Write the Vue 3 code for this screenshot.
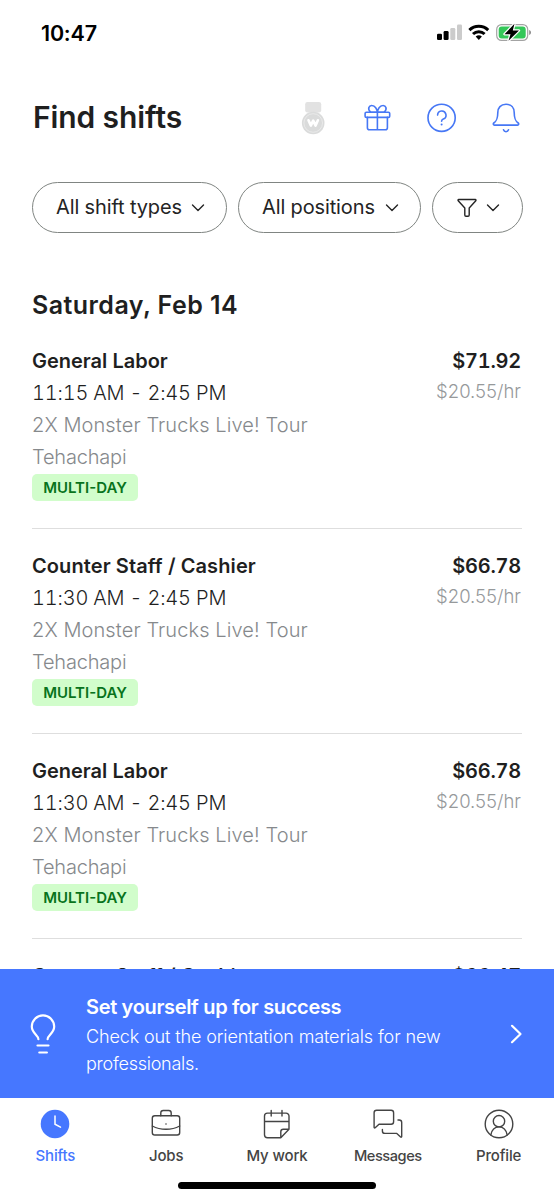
<script setup>
const shifts = [
  { id: 1, role: 'General Labor', cls: 'labor', time: '11:15 AM - 2:45 PM', pay: '$71.92' },
  { id: 2, role: 'Counter Staff / Cashier', cls: 'counter', time: '11:30 AM - 2:45 PM', pay: '$66.78' },
  { id: 3, role: 'General Labor', cls: 'labor', time: '11:30 AM - 2:45 PM', pay: '$66.78' },
  { id: 4, role: 'Counter Staff / Cashier', cls: 'counter', pay: '$66.47' },
]
</script>

<template>
  <div class="screen">
    <header class="status">
      <span class="clock">10:47</span>
      <svg class="status-icons" width="96" height="20" viewBox="0 0 96 20">
        <rect x="0" y="10.8" width="5" height="6.2" rx="1.3" />
        <rect x="6.6" y="8" width="5" height="9" rx="1.3" />
        <rect x="13.3" y="5" width="5" height="12" rx="1.3" fill="#cbcbcb" />
        <rect x="20" y="1.6" width="5" height="15.4" rx="1.3" fill="#cbcbcb" />
        <g fill="none" stroke="#000" stroke-width="3">
          <path d="M32.4 7.1a13.6 13.6 0 0 1 18.8 0" />
          <path d="M36 11a8.4 8.4 0 0 1 11.6 0" />
        </g>
        <path d="M38.7 13.6a4.6 4.6 0 0 1 6.2 0L41.8 17z" />
        <rect x="59.7" y="1.6" width="31" height="15.8" rx="4.8" fill="none" stroke="#a3a3a3" stroke-width="1.2" />
        <rect x="61.7" y="3.6" width="27" height="11.8" rx="3" fill="#34c759" />
        <path d="M92.2 7v5c2.4-.9 2.4-4.1 0-5z" fill="#8e8e8e" />
        <path d="M77.5 .8l-10 10.400h6L71.500 17.800l10.500-10.300h-6.200z" stroke="#fff" stroke-width="2.400" paint-order="stroke" stroke-linejoin="round" />
      </svg>
    </header>

    <section class="title-row">
      <h1>Find shifts</h1>
      <div class="actions">
        <svg width="32" height="34" viewBox="0 0 32 34">
          <rect x="8.2" y="1" width="16" height="10.5" rx="2.2" fill="#e2e2e2" />
          <circle cx="16.2" cy="22" r="11.3" fill="#dadbdb" />
          <circle cx="16.2" cy="22" r="9.3" fill="none" stroke="#efefef" stroke-width=".7" />
          <path d="M11.5 19.300l2.300 5.300L16.200 19.600l2.400 5 2.300-5.300" fill="none" stroke="#fff" stroke-width="2.600" stroke-linecap="round" stroke-linejoin="round" />
        </svg>
        <svg class="line blue" width="32" height="34" viewBox="0.6 0 32 34">
          <rect x="3.7" y="11.2" width="24.6" height="5.2" rx="1.2" />
          <path d="M6 16.400v10.300a2 2 0 0 0 2 2h16a2 2 0 0 0 2-2V16.400M16 11.200v17.500M16 11.200H9.200C5.700 8 7.600 4.300 10.600 4.500 13.600 4.600 15.700 8 16 11.200zM16 11.200h6.800c3.500-3.200 1.600-6.900-1.400-6.700-3 .1-5.100 3.500-5.400 6.700z" />
        </svg>
        <svg class="line blue" width="32" height="34" viewBox="0.4 0.2 32 34">
          <circle cx="16" cy="17" r="13.6" />
          <path d="M12 14.300a4.200 4.200 0 1 1 5.700 4c-1.200.5-1.700 1-1.700 2.100" />
          <circle cx="16" cy="23.6" r="1" fill="#4677f5" stroke="none" />
        </svg>
        <svg class="line blue" width="32" height="34" viewBox="0 0 32 34">
          <path d="M16 3.300c-5.300 0-8.200 3.500-8.200 8.300 0 6.400-1.200 8.400-4 10.400-.9.700-.5 2.100.6 2.100h23.200c1.100 0 1.500-1.400.6-2.100-2.800-2-4-4-4-10.400 0-4.800-2.900-8.300-8.200-8.300zM13.500 28.800c.8 2.500 4.200 2.500 5 0" />
        </svg>
      </div>
    </section>

    <section class="filters">
      <button class="pill types"><span>All shift types</span>
        <svg class="line" width="14" height="10" viewBox="0 0 14 10"><path d="M1.500 2 7 7.500 12.500 2" /></svg>
      </button>
      <button class="pill positions"><span>All positions</span>
        <svg class="line" width="14" height="10" viewBox="0 0 14 10"><path d="M1.500 2 7 7.500 12.500 2" /></svg>
      </button>
      <button class="pill funnel">
        <svg class="line" width="20" height="20" viewBox="0 0 20 20"><path d="M1.700 1.500h16.600c.7 0 .9.900.5 1.300L12.200 10v7c0 .9-.5 1.300-1.200 1.300H9c-.7 0-1.200-.4-1.200-1.300v-7L1.200 2.800c-.4-.4-.2-1.300.5-1.300z" /></svg>
        <svg class="line" width="14" height="10" viewBox="0 0 14 10"><path d="M1.500 2 7 7.500 12.500 2" /></svg>
      </button>
    </section>

    <main class="list">
      <h2>Saturday, Feb 14</h2>
      <article v-for="s in shifts" :key="s.id" class="shift">
        <div class="info">
          <div class="role" :class="s.cls">{{ s.role }}</div>
          <template v-if="s.time">
            <div class="time">{{ s.time }}</div>
            <div class="venue">2X Monster Trucks Live! Tour</div>
            <div class="city">Tehachapi</div>
            <div class="badge">MULTI-DAY</div>
          </template>
        </div>
        <div class="pay">
          <div class="total">{{ s.pay }}</div>
          <div v-if="s.time" class="rate">$20.55/hr</div>
        </div>
      </article>
    </main>

    <aside class="banner">
      <svg class="bulb" width="28" height="42" viewBox="0 0 28 42">
        <path d="M9.400 25.200c0-4.200-6.600-5.900-6.600-12.600a11.200 11.200 0 0 1 22.400 0c0 6.700-6.600 8.400-6.600 12.600M8.500 31.500h11M10.300 38.500h7.600" />
      </svg>
      <div class="banner-text">
        <div class="banner-title">Set yourself up for success</div>
        <div class="banner-body"><span class="b1">Check out the orientation materials for new</span><br /><span class="b2">professionals.</span></div>
      </div>
      <svg class="arrow" width="14" height="22" viewBox="0 0 14 22"><path d="M3 2.800 11.500 11 3 19.200" /></svg>
    </aside>

    <nav class="tabs">
      <div class="tab active">
        <svg width="32" height="32" viewBox="0 0 32 32"><circle cx="16" cy="16" r="14.3" fill="#4677ff" /><path d="M16 8v8.200l5.500 2.900" fill="none" stroke="#fff" stroke-width="1.500" stroke-linecap="round" /></svg>
        <span class="l1">Shifts</span>
      </div>
      <div class="tab">
        <svg class="line" width="32" height="32" viewBox="0 0 32 32"><rect x="2.3" y="7.700" width="27.400" height="19.300" rx="2.500" /><path d="M10.800 7.700V5a2.500 2.500 0 0 1 2.500-2.500h5.400A2.500 2.500 0 0 1 21.200 5v2.700M2.300 18c8.200 4.400 19.200 4.400 27.400 0" /><circle cx="16" cy="16" r=".8" fill="#444" stroke="none" /></svg>
        <span class="l2">Jobs</span>
      </div>
      <div class="tab">
        <svg class="line" width="32" height="32" viewBox="0 0 32 32"><path d="M19.800 29.800H6.500a3 3 0 0 1-3-3V8.100a3 3 0 0 1 3-3h18.500a3 3 0 0 1 3 3v13.200zM3.500 13.500h24.500M10.200 2.500v5.500M21 2.500v5.500M19.800 29.800v-6a2.500 2.500 0 0 1 2.500-2.500h5.700" /></svg>
        <span class="l3">My work</span>
      </div>
      <div class="tab">
        <svg class="line" width="32" height="32" viewBox="0 0 32 32"><path d="M4.600 2.300h14.500a2.500 2.500 0 0 1 2.500 2.500v9a2.500 2.500 0 0 1-2.500 2.500H7L3.200 19.700c-.6.500-1.100.2-1.100-.5V4.800a2.500 2.500 0 0 1 2.500-2.500zM26 12h1.200a2.500 2.500 0 0 1 2.500 2.500v13.900c0 .8-.6 1-1.100.5l-3.800-3.500H12.900a2.500 2.500 0 0 1-2.500-2.500v-1.500" /></svg>
        <span class="l4">Messages</span>
      </div>
      <div class="tab">
        <svg class="line" width="32" height="32" viewBox="0 0 32 32"><circle cx="16" cy="16" r="13.8" /><circle cx="16" cy="13.200" r="5.700" /><path d="M7.800 27c1-5.200 4-8.100 8.200-8.100s7.200 2.900 8.200 8.100" /></svg>
        <span class="l5">Profile</span>
      </div>
    </nav>
    <div class="home"></div>
  </div>
</template>

<style>
html, body { margin: 0; background: #fff; }
</style>

<style scoped>
.screen {
  width: 554px; height: 1200px; overflow: hidden; box-sizing: border-box;
  display: flex; flex-direction: column; background: #fff; color: #1f1f1f;
  font-family: Inter, "Liberation Sans", sans-serif; white-space: nowrap;
}
svg { display: block; flex: none; }
.line { fill: none; stroke: currentColor; stroke-width: 1.4; stroke-linecap: round; stroke-linejoin: round; }
.blue { stroke: #4677f5; stroke-width: 1.6; }
.status { height: 80px; flex: none; padding: 23px 21px 0 41px; box-sizing: border-box; display: flex; justify-content: space-between; }
.clock { color: #000; font-size: 21.5px; line-height: 20px; font-weight: 600; letter-spacing: -0.2px; }
.title-row { height: 76px; margin-bottom: -2px; flex: none; padding: 0 32px 0 33px; display: flex; align-items: center; justify-content: space-between; }
h1 { margin: 0 0 2px; font-size: 30px; line-height: 36px; font-weight: 620; letter-spacing: -0.1px; }
.actions { display: flex; gap: 32.2px; }
.filters { display: flex; gap: 11px; padding: 28px 31px 0 32px; flex: none; }
.pill { height: 51px; box-sizing: border-box; border: 1px solid #808582; border-radius: 26px; background: #fff; margin: 0; padding: 0 21px 0 23px; display: flex; align-items: center; justify-content: space-between; font: 380 20px/26px Inter, sans-serif; color: #242424; letter-spacing: -0.13px; }
.pill span { margin-top: -2px; }
.types { width: 195px; }
.positions { width: 183px; }
.funnel { width: 91px; padding-left: 24px; padding-right: 22px; }
.list { height: 736px; flex: none; overflow: hidden; padding: 0 32px; box-sizing: border-box; }
h2 { margin: 55px 0 23px; font-size: 25px; line-height: 34px; font-weight: 620; letter-spacing: 0.45px; }
.shift { height: 205px; box-sizing: border-box; border-bottom: 1px solid #dedede; display: flex; justify-content: space-between; }
.shift + .shift { padding-top: 21px; }
h2 + .shift { height: 184px; }
.info > div { height: 32px; line-height: 32px; font-size: 20px; }
.info .role { font-weight: 620; }
.counter { letter-spacing: 0.1px; }
.time { font-weight: 330; font-variant-numeric: tabular-nums; letter-spacing: -0.2px; }
.venue, .city { font-weight: 300; color: #86898c; }
.venue { letter-spacing: 0.1px; }
.city { letter-spacing: -0.2px; }
.info .badge { width: 106px; height: 27px; line-height: 27px; margin-top: 1px; border-radius: 5px; background: #d1fdcb; color: #08731c; font-size: 15px; font-weight: 600; text-align: center; }
.pay { text-align: right; margin-right: 1px; }
.total { font-size: 20px; line-height: 32px; font-weight: 620; font-variant-numeric: tabular-nums; letter-spacing: -0.25px; }
.rate { font-size: 18.5px; line-height: 28px; font-weight: 300; color: #96999b; }
.banner { height: 129px; flex: none; background: #4677ff; color: #fff; display: flex; padding: 1px 31px 0 29px; box-sizing: border-box; align-items: center; }
.bulb, .arrow { fill: none; stroke: #fff; stroke-width: 2.2; stroke-linecap: round; stroke-linejoin: round; }
.bulb { margin-top: 2px; }
.banner-text { margin-left: 29px; flex: 1; }
.banner-title { font-size: 20px; line-height: 30px; font-weight: 600; letter-spacing: -0.33px; }
.banner-body { font-size: 18px; line-height: 27px; font-weight: 300; margin: 1px 0 -1px; }
.b1 { letter-spacing: -0.12px; }
.b2 { letter-spacing: -0.25px; }
.tabs { height: 79px; flex: none; display: flex; color: #444; padding-top: 9.5px; box-sizing: border-box; }
.tab { flex: 1; display: flex; flex-direction: column; align-items: center; }
.tab span { font-size: 15px; line-height: 24px; margin-top: 4.5px; font-weight: 500; letter-spacing: -0.15px; }
.tab .l4 { font-size: 14.6px; letter-spacing: -0.45px; }
.active { color: #4677ff; }
.home { width: 198px; height: 7px; flex: none; border-radius: 4px; background: #000; margin: 5px auto 0; }
</style>
